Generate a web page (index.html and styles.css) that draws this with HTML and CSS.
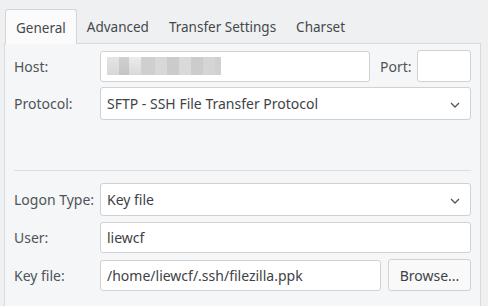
FILE: index.html
```html
<!DOCTYPE html>
<html>
<head>
<meta charset="utf-8">
<link rel="stylesheet" href="styles.css">
</head>
<body>
<div class="tabs">
  <div class="tab active">General</div>
  <div class="tab">Advanced</div>
  <div class="tab">Transfer Settings</div>
  <div class="tab">Charset</div>
</div>
<div class="panel">
  <div class="row r-host">
    <div class="label">Host:</div>
    <div class="field input host">
      <span class="blur"><i class="b1"></i><i class="b2"></i><i class="b3"></i><i class="b4"></i><i class="b5"></i><i class="b6"></i><i class="b7"></i><i class="b8"></i><i class="b9"></i><i class="b10"></i></span>
    </div>
    <div class="port-label">Port:</div>
    <div class="input port"></div>
  </div>
  <div class="row r-proto">
    <div class="label">Protocol:</div>
    <div class="field combo">SFTP - SSH File Transfer Protocol<svg class="chev" width="10" height="6" viewBox="0 0 10 6"><path d="M1 1l4 4 4-4" fill="none" stroke="#555" stroke-width="1.3"/></svg></div>
  </div>
  <div class="sep"></div>
  <div class="row r-logon">
    <div class="label">Logon Type:</div>
    <div class="field combo">Key file<svg class="chev" width="10" height="6" viewBox="0 0 10 6"><path d="M1 1l4 4 4-4" fill="none" stroke="#555" stroke-width="1.3"/></svg></div>
  </div>
  <div class="row r-user">
    <div class="label">User:</div>
    <div class="field input">liewcf</div>
  </div>
  <div class="row r-key">
    <div class="label">Key file:</div>
    <div class="field input">/home/liewcf/.ssh/filezilla.ppk</div>
    <div class="button">Browse...</div>
  </div>
</div>
</body>
</html>
```
FILE: styles.css
```css
html, body {
  margin: 0;
  padding: 0;
  background: #eff0f1;
  font-family: "Noto Sans", "Open Sans", sans-serif;
  font-size: 14px;
  color: #3b3f43;
  width: 488px;
  height: 306px;
  overflow: hidden;
}
.tabs {
  display: flex;
  padding: 9px 0 0 5px;
  height: 43px;
  box-sizing: border-box;
  font-size: 13.5px;
}
.tab {
  height: 34px;
  box-sizing: border-box;
  padding: 0 10px;
  line-height: 36px;
  color: #44484c;
}
.tab.active {
  background: #fbfbfc;
  border: 1px solid #d3d5d7;
  border-bottom: none;
  border-radius: 3px 3px 0 0;
  height: 35px;
  padding: 0 10px;
  position: relative;
  z-index: 1;
}
.panel {
  margin: 0 7px 0 4px;
  background: #f5f6f7;
  border: 1px solid #d8dadc;
  border-bottom: none;
  height: 263px;
  box-sizing: border-box;
  padding: 6px 9px 0 9px;
}
.row {
  display: flex;
  align-items: center;
}
.label {
  width: 86px;
  flex: none;
  color: #4f5357;
}
.field {
  flex: 1;
  box-sizing: border-box;
  background: #fff;
  border: 1px solid #cfd1d3;
  border-radius: 3px;
  padding: 0 6px;
  display: flex;
  align-items: center;
  color: #3e4246;
}
.input { height: 31px; }
.combo { height: 33px; position: relative; }
.chev { position: absolute; right: 10px; top: 14px; }
.r-host { height: 32px; }
.r-proto { margin-top: 5px; }
.r-logon { margin-top: 0; }
.r-user { margin-top: 6px; }
.r-key { margin-top: 6px; }
.host { flex: none; width: 270px; }
.port-label {
  margin-left: 10px;
  width: 37px;
  color: #4f5357;
}
.port {
  width: 54px;
  height: 32px;
  box-sizing: border-box;
  background: #fff;
  border: 1px solid #cfd1d3;
  border-radius: 3px;
}
.sep {
  height: 1px;
  background: #dcdee0;
  margin: 50px 0 12px 0;
}
.button {
  margin-left: 7px;
  width: 83px;
  height: 32px;
  box-sizing: border-box;
  background: #f9f9fa;
  border: 1px solid #cfd1d3;
  border-radius: 3px;
  display: flex;
  align-items: center;
  justify-content: center;
  color: #3e4246;
}
.blur {
  display: flex;
  height: 18px;
  margin-left: 0;
}
.blur i { display: block; height: 18px; width: 10px; }
.b1 { background: linear-gradient(#e4e4e4, #d7d7d7); width: 12px !important; }
.b2 { background: linear-gradient(#d0d0d0, #c4c4c4); }
.b3 { background: linear-gradient(#ececec, #d9d9d9); width: 12px !important; }
.b4 { background: #cfcfcf; width: 14px !important; }
.b5 { background: #d8d8d8; width: 12px !important; }
.b6 { background: #cbcbcb; width: 12px !important; }
.b7 { background: #dadada; width: 12px !important; }
.b8 { background: #cccccc; width: 12px !important; }
.b9 { background: #d5d5d5; width: 12px !important; }
.b10 { background: #d0d0d0; width: 6px !important; }
```
